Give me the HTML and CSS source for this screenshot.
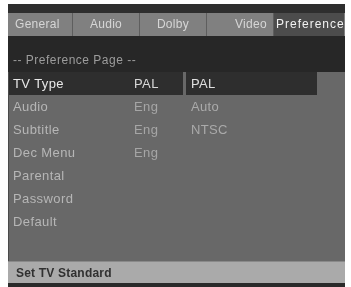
FILE: index.html
```html
<!DOCTYPE html>
<html>
<head>
<meta charset="utf-8">
<link rel="stylesheet" href="styles.css">
</head>
<body>
<div class="screen">
  <div class="topstrip"></div>
  <div class="tabs">
    <div class="tab">General</div>
    <div class="tab">Audio</div>
    <div class="tab">Dolby</div>
    <div class="tab tab-right">Video</div>
    <div class="tab active">Preference</div>
  </div>
  <div class="pagehead">-- Preference Page --</div>
  <div class="panel">
    <div class="menu">
      <div class="row sel"><span class="label">TV Type</span><span class="val">PAL</span></div>
      <div class="row"><span class="label">Audio</span><span class="val">Eng</span></div>
      <div class="row"><span class="label">Subtitle</span><span class="val">Eng</span></div>
      <div class="row"><span class="label">Dec Menu</span><span class="val">Eng</span></div>
      <div class="row"><span class="label">Parental</span></div>
      <div class="row"><span class="label">Password</span></div>
      <div class="row"><span class="label">Default</span></div>
    </div>
    <div class="options">
      <div class="opt sel">PAL</div>
      <div class="opt">Auto</div>
      <div class="opt">NTSC</div>
    </div>
  </div>
  <div class="status">Set TV Standard</div>
</div>
</body>
</html>
```

FILE: styles.css
```css
html, body {
  margin: 0;
  padding: 0;
  background: #ffffff;
}
body {
  font-family: "Liberation Sans", Arial, sans-serif;
  font-size: 12px;
}
.screen {
  margin: 4px 6px 0 8px;
  width: 337px;
  height: 283px;
  background: #2a2a2a;
  display: flex;
  flex-direction: column;
  filter: blur(0.45px);
  overflow: hidden;
}
.topstrip {
  height: 9px;
  background: #2e2e2e;
}
.tabs {
  height: 23px;
  display: flex;
  background: #808080;
}
.tab {
  width: 67px;
  display: flex;
  align-items: center;
  justify-content: center;
  color: #d6d6d6;
  border-right: 1px solid #5e5e5e;
  box-sizing: border-box;
  letter-spacing: 0.3px;
  white-space: nowrap;
}
.tab:first-child {
  width: 65px;
  justify-content: flex-start;
  padding-left: 7px;
}
.tab-right {
  justify-content: flex-end;
  padding-right: 6px;
}
.tab.active {
  width: 70px;
  background: #4c4c4c;
  color: #f2f2f2;
  border-right: none;
  justify-content: flex-start;
  padding-left: 2px;
  letter-spacing: 1px;
  overflow: hidden;
}
.pagehead {
  height: 36px;
  box-sizing: border-box;
  padding: 17px 0 0 5px;
  color: #9c9c9c;
  background: #272727;
  letter-spacing: 0.5px;
}
.panel {
  height: 190px;
  background: #686868;
  display: flex;
  border-left: 1px solid #4a4a4a;
  font-size: 13px;
}
.menu {
  width: 174px;
}
.row {
  height: 23px;
  display: flex;
  align-items: center;
  color: #b6b6b6;
  letter-spacing: 0.4px;
}
.row.sel {
  background: #2e2e2e;
  color: #e8e8e8;
}
.label {
  width: 121px;
  padding-left: 4px;
}
.val {
  color: #a6a6a6;
}
.row.sel .val {
  color: #d8d8d8;
}
.options {
  margin-left: 3px;
  width: 131px;
}
.opt {
  height: 23px;
  display: flex;
  align-items: center;
  padding-left: 5px;
  color: #aaaaaa;
  letter-spacing: 0.3px;
}
.opt.sel {
  background: #2e2e2e;
  color: #e0e0e0;
}
.status {
  height: 21px;
  background: #aaaaaa;
  color: #303030;
  display: flex;
  align-items: center;
  padding-left: 8px;
  font-weight: bold;
  letter-spacing: 0.2px;
  border-top: 1px solid #8a8a8a;
  border-bottom: 4px solid #2a2a2a;
  box-sizing: content-box;
}
```
